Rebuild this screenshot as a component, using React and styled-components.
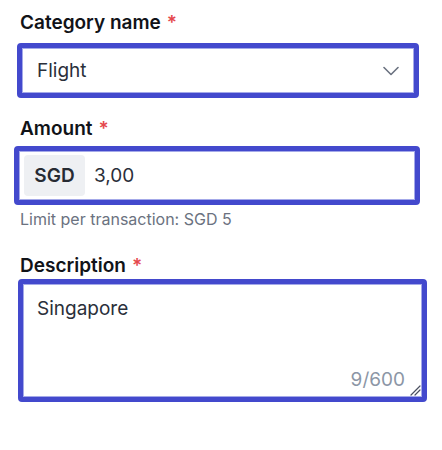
import styled, { createGlobalStyle } from "styled-components";

const GlobalStyle = createGlobalStyle`
    body {
        margin: 0;
        background: #ffffff;
        font-family: Inter, "Noto Sans", sans-serif;
    }
`

const Page = styled.div`
    display: flex;
    flex-direction: column;
    padding: 11px 26px 0 20px;
    width: 442px;
    box-sizing: border-box;
`

const Label = styled.div`
    font-size: 19px;
    line-height: 24px;
    font-weight: 600;
    color: #111318;
    margin-top: ${p => p.$top || 0}px;
`

const Star = styled.span`
    color: #e5484d;
    margin-left: 6px;
`

const Box = styled.div`
    position: relative;
    display: flex;
    align-items: ${p => p.$align || "center"};
    box-sizing: border-box;
    height: ${p => p.$height}px;
    margin: ${p => p.$top}px ${p => p.$right}px 0 ${p => p.$left}px;
    border: 5px solid #4349cd;
    border-radius: 4px;
    box-shadow: inset 0 0 0 1px #a4a9e9;
    background: #ffffff;
    padding: ${p => p.$pad};
`

const Value = styled.span`
    flex: 1;
    font-size: 19px;
    line-height: 24px;
    color: #2a2f3a;
`

const Addon = styled.div`
    display: flex;
    align-items: center;
    justify-content: center;
    width: 61px;
    align-self: stretch;
    background: #eef0f3;
    border-radius: 4px;
    font-size: 19px;
    font-weight: 600;
    color: #262b33;
    margin-right: 9px;
`

const Helper = styled.div`
    font-size: 16px;
    line-height: 20px;
    color: #6b7280;
    margin-top: 4px;
`

const Counter = styled.span`
    position: absolute;
    right: 17px;
    bottom: 5px;
    font-size: 19px;
    line-height: 24px;
    color: #8c96a6;
`

const Grip = styled.svg`
    position: absolute;
    right: 1px;
    bottom: 1px;
`

function Chevron() {
    return (
        <svg width="16" height="10" viewBox="0 0 16 10">
            <path d="M1 1.5 L8 8.5 L15 1.5" fill="none" stroke="#6b7280" strokeWidth="1.6" strokeLinecap="round" strokeLinejoin="round" />
        </svg>
    )
}

export default function App() {
    return (
        <Page>
            <GlobalStyle />

            <Label>Category name<Star>*</Star></Label>
            <Box $height={55} $top={8} $left={-3} $right={-3} $pad="0 15px 0 15px">
                <Value>Flight</Value>
                <Chevron />
            </Box>

            <Label $top={19}>Amount<Star>*</Star></Label>
            <Box $height={59} $top={5} $left={-6} $right={-4} $pad="4px 5px">
                <Addon>SGD</Addon>
                <Value>3,00</Value>
            </Box>
            <Helper>Limit per transaction: SGD 5</Helper>

            <Label $top={25}>Description<Star>*</Star></Label>
            <Box $height={123} $top={1} $left={-2} $right={-11} $align="flex-start" $pad="13px 14px">
                <Value>Singapore</Value>
                <Counter>9/600</Counter>
                <Grip width="12" height="12" viewBox="0 0 12 12">
                    <path d="M2 11 L11 2 M6 11 L11 6" stroke="#4b5060" strokeWidth="1.2" strokeLinecap="round" />
                </Grip>
            </Box>
        </Page>
    );
}
